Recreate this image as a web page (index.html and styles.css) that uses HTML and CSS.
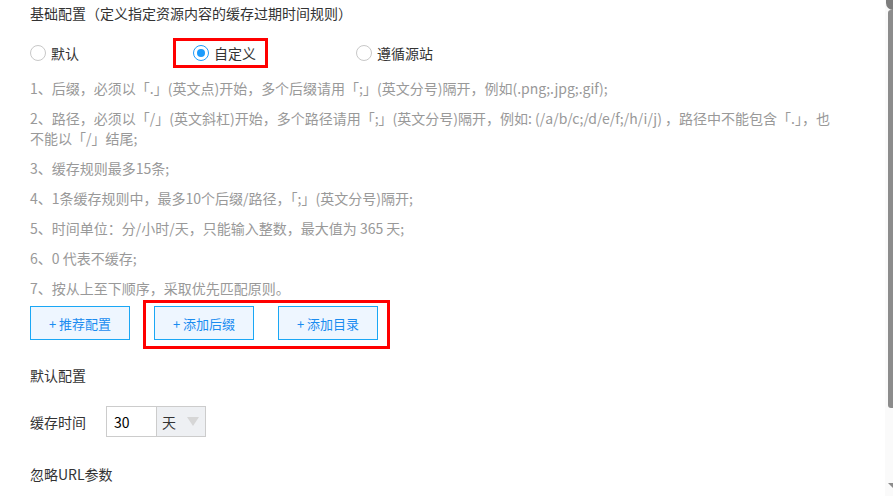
FILE: index.html
```html
<!DOCTYPE html>
<html lang="zh-CN">
<head>
    <meta charset="UTF-8">
    <meta name="viewport" content="width=device-width, initial-scale=1.0">
    <title>缓存配置</title>
    <link rel="stylesheet" href="styles.css">
</head>
<body>

<div class="page">
    <div class="content">
        <h3 class="section-title">基础配置（定义指定资源内容的缓存过期时间规则）</h3>

        <!-- Cache mode -->
        <div class="radio-group">
            <label class="radio"><span class="radio-dot"></span>默认</label>
            <label class="radio checked marked"><span class="radio-dot"></span>自定义</label>
            <label class="radio last"><span class="radio-dot"></span>遵循源站</label>
        </div>

        <!-- Rules -->
        <ul class="tips">
            <li>1、后缀，必须以「.」(英文点)开始，多个后缀请用「;」(英文分号)隔开，例如(.png;.jpg;.gif);</li>
            <li>2、路径，必须以「/」(英文斜杠)开始，多个路径请用「;」(英文分号)隔开，例如: (/a/b/c;/d/e/f;/h/i/j) ，路径中不能包含「.」，也不能以「/」结尾;</li>
            <li>3、缓存规则最多15条;</li>
            <li>4、1条缓存规则中，最多10个后缀/路径，「;」(英文分号)隔开;</li>
            <li>5、时间单位：分/小时/天，只能输入整数，最大值为 365 天;</li>
            <li>6、0 代表不缓存;</li>
            <li>7、按从上至下顺序，采取优先匹配原则。</li>
        </ul>

        <div class="btn-row">
            <button class="btn">+ 推荐配置</button>
            <div class="btn-group marked">
                <button class="btn">+ 添加后缀</button>
                <button class="btn">+ 添加目录</button>
            </div>
        </div>

        <h3 class="sub-title">默认配置</h3>
        <div class="form-row">
            <span class="form-label">缓存时间</span>
            <input class="num-input" type="text" value="30">
            <div class="unit-select">天<span class="caret"></span></div>
        </div>

        <h3 class="sub-title ignore">忽略URL参数</h3>
    </div>

    <!-- Scrollbar -->
    <div class="scrollbar">
        <div class="scroll-cap"></div>
        <div class="scroll-thumb"></div>
        <div class="scroll-arrow"></div>
    </div>
</div>

</body>
</html>
```

FILE: styles.css
```css
/* Page */
body {
    margin: 0;
    background: #fff;
    font-family: "Noto Sans CJK SC", "Liberation Sans", sans-serif;
    font-size: 14px;
    color: #333;
}

.page {
    display: flex;
    width: 893px;
    height: 496px;
    overflow: hidden;
}

.content {
    flex: 1;
    padding: 3px 0 0 30px;
}

/* Titles */
.section-title,
.sub-title {
    margin: 0;
    font-size: 14px;
    font-weight: normal;
    line-height: 20px;
    color: #333;
}

.sub-title {
    margin-top: 16px;
}

.sub-title.ignore {
    margin-top: 27px;
}

/* Radios */
.radio-group {
    display: flex;
    align-items: center;
    margin-top: 15px;
    height: 30px;
}

.radio {
    display: flex;
    align-items: center;
    gap: 5px;
    width: 143px;
    line-height: 20px;
    color: #333;
    cursor: pointer;
}

.radio.marked {
    box-sizing: border-box;
    width: 95px;
    height: 30px;
    padding-left: 17px;
    border: 3px solid #f00;
}

.radio.last {
    width: auto;
    margin-left: 88px;
}

.radio-dot {
    position: relative;
    box-sizing: border-box;
    width: 16px;
    height: 16px;
    border: 1px solid #c8c8c8;
    border-radius: 50%;
    background: #fff;
}

.radio.checked .radio-dot {
    border-color: #1a9bfc;
}

.radio.checked .radio-dot::after {
    content: "";
    position: absolute;
    top: 3px;
    left: 3px;
    width: 8px;
    height: 8px;
    border-radius: 50%;
    background: #1a9bfc;
}

/* Tips */
.tips {
    width: 805px;
    margin: 10px 0 0;
    padding: 0;
    list-style: none;
    color: #999;
    line-height: 20px;
}

.tips li {
    margin-bottom: 10px;
}

.tips li:last-child {
    margin-bottom: 0;
}

/* Buttons */
.btn-row {
    display: flex;
    align-items: flex-start;
    margin-top: 2px;
}

.btn-row > .btn {
    margin-top: 6px;
}

.btn-group {
    display: flex;
    gap: 24px;
}

.btn-group.marked {
    margin-left: 13px;
    padding: 3px 9px 6px 8px;
    border: 3px solid #f00;
}

.btn {
    box-sizing: border-box;
    width: 100px;
    height: 34px;
    padding: 0;
    border: 1px solid #1aa7f5;
    background: #eef6ff;
    color: #1a8cf0;
    font-family: inherit;
    font-size: 13px;
    cursor: pointer;
}

/* Form row */
.form-row {
    display: flex;
    align-items: center;
    margin-top: 21px;
}

.form-label {
    width: 76px;
    line-height: 20px;
}

.num-input {
    box-sizing: border-box;
    width: 50px;
    height: 31px;
    padding: 0 7px;
    border: 1px solid #ccc;
    border-right: none;
    font-family: inherit;
    font-size: 14px;
    color: #000;
    outline: none;
}

.unit-select {
    display: flex;
    align-items: center;
    justify-content: space-between;
    box-sizing: border-box;
    width: 50px;
    height: 31px;
    padding: 0 6px 0 5px;
    border: 1px solid #ccc;
    background: #eef0f3;
    color: #333;
}

.caret {
    width: 0;
    height: 0;
    border-left: 6px solid transparent;
    border-right: 6px solid transparent;
    border-top: 9px solid #d6d6d6;
}

/* Scrollbar */
.scrollbar {
    position: relative;
    width: 8px;
    background: #fafafa;
}

.scroll-cap {
    position: absolute;
    top: 0;
    right: 0;
    width: 7px;
    height: 10px;
    border-radius: 0 0 0 7px;
    background: #7d7d7d;
}

.scroll-thumb {
    position: absolute;
    top: 10px;
    right: 0;
    width: 5px;
    height: 398px;
    border-radius: 3px 0 0 3px;
    background: #8c8c8c;
}

.scroll-arrow {
    position: absolute;
    top: 483px;
    right: 0;
    width: 0;
    height: 0;
    border-left: 5px solid transparent;
    border-top: 5px solid #8c8c8c;
}
```
